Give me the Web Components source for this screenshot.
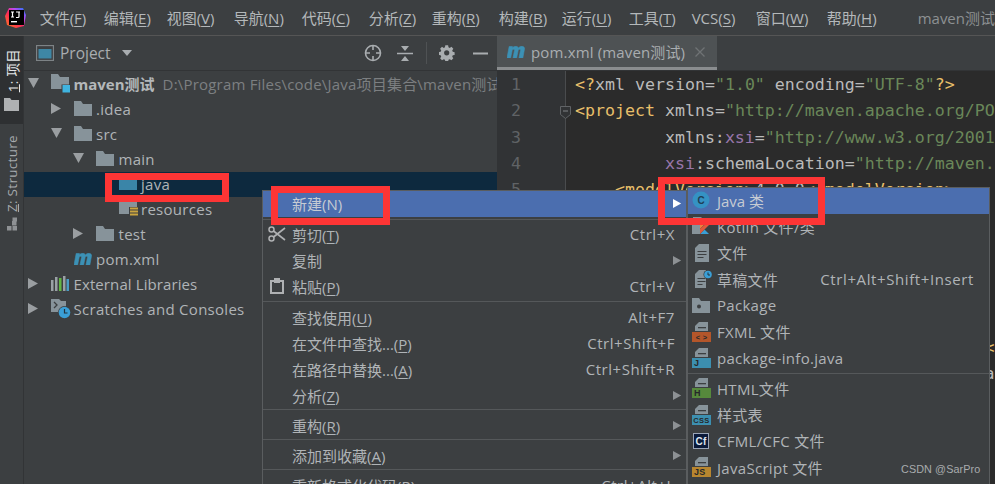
<!DOCTYPE html>
<html lang="zh">
<head>
<meta charset="utf-8">
<title>maven测试</title>
<style>
html,body{margin:0;padding:0;background:#3c3f41}
body{font-family:"Open Sans","Noto Sans CJK SC",sans-serif;font-size:15px;color:#bbb}
</style>
</head>
<body>
<ide-app></ide-app>
<script>
//icons, all drawn inline
const ICONS = {
  logo:`<svg width="22" height="22" viewBox="0 0 22 22"><defs><linearGradient id="g" x1="0" y1="1" x2="1" y2="0"><stop offset="0" stop-color="#fc801d"/><stop offset=".45" stop-color="#fe2857"/><stop offset=".7" stop-color="#b74af7"/><stop offset="1" stop-color="#087cfa"/></linearGradient></defs><path d="M4 1h14l3 7-2 11-8 2-9-3-2-9z" fill="url(#g)"/><rect x="4" y="3" width="15" height="15" fill="#000"/><rect x="6" y="14" width="6" height="1.4" fill="#fff"/><path d="M6 5h3M7.500 5v5M6 10h3M11 5h4M14 5v4.500q0 1-1 1h-2" stroke="#fff" stroke-width="1.200" fill="none"/></svg>`,
  folder:`<svg width="18" height="15" viewBox="0 0 18 15"><path d="M0 0h7l2 3h9v12H0z" fill="#87939a"/></svg>`,
  module:`<svg width="20" height="19" viewBox="0 0 20 19"><path d="M0 0h7l2 3h9v12H0z" fill="#87939a"/><rect x="10.500" y="10.500" width="9" height="9" fill="#3c3f41"/><rect x="11.500" y="11" width="7.500" height="7.500" fill="#3fb4e0"/></svg>`,
  source:`<svg width="18" height="15" viewBox="0 0 18 15"><path d="M0 1h7l1 1h10v12H0z" fill="#3a85a8"/></svg>`,
  resources:`<svg width="20" height="19" viewBox="0 0 20 19"><path d="M0 0h7l2 3h9v12H0z" fill="#87939a"/><rect x="10" y="8" width="10" height="11" fill="#3c3f41"/><path d="M11 9.500h8M11 12.500h8M11 15.500h8" stroke="#c9a43f" stroke-width="1.800"/></svg>`,
  maven:`<svg width="18" height="12" viewBox="2.500 1 16.500 13" preserveAspectRatio="none"><path d="M2.500 14 L4.500 1.500h3l-.3 1.500Q9 1 11 1.300q1.500.3 1.800 1.900Q14.500 1 16.500 1.300q2.500.4 2 3.200L17 14h-3.500l1.400-8.300q.2-1.300-.7-1.300-1 0-1.500 1.500L11.300 14H8l1.400-8.300q.2-1.300-.7-1.300-1 0-1.500 1.500L5.800 14z" fill="#3c91b5" stroke="#3c91b5" stroke-width=".6"/></svg>`,
  libs:`<svg width="18" height="16" viewBox="0 0 18 16"><rect x="0" y="4" width="2.500" height="11" fill="#9aa1a6"/><rect x="4" y="1" width="2.500" height="14" fill="#9aa1a6"/><rect x="8" y="2" width="2.500" height="13" fill="#62b543"/><rect x="12" y="0" width="2.500" height="15" fill="#9aa1a6"/><rect x="15.500" y="3" width="2.500" height="12" fill="#4a9cc4"/></svg>`,
  scratch:`<svg width="20" height="20" viewBox="0 0 20 20"><path d="M0 0h8l2 2h5v11H0z" fill="#87939a"/><path d="M3 3l3 3-3 3" stroke="#3c3f41" stroke-width="1.300" fill="none"/><circle cx="13.500" cy="13.500" r="6.500" fill="#3c3f41"/><circle cx="13.500" cy="13.500" r="5.800" fill="#3a9fd6"/><path d="M13.500 10v4h3" stroke="#23333d" stroke-width="1.200" fill="none"/></svg>`,
  projectView:`<svg width="18" height="16" viewBox="0 0 18 16"><rect x=".5" y=".5" width="17" height="15" fill="#3c3f41" stroke="#7d8386" stroke-width="1.300"/><rect x="2.500" y="4" width="13" height="9.500" fill="#3e87a5"/></svg>`,
  target:`<svg width="18" height="18" viewBox="0 0 18 18"><circle cx="9" cy="9" r="7.500" fill="none" stroke="#a9adb0" stroke-width="1.600"/><path d="M9 1v5M9 12v5M1 9h5M12 9h5" stroke="#a9adb0" stroke-width="1.600"/></svg>`,
  collapse:`<svg width="16" height="17" viewBox="0 0 16 17"><path d="M0 8.500h16" stroke="#a9adb0" stroke-width="1.500"/><path d="M4 1h8L8 6zM4 16h8l-4-5z" fill="#a9adb0"/></svg>`,
  gear:`<svg width="16" height="16" viewBox="0 0 16 16"><path d="M6.500 0h3l.4 2.200 1.300.6 1.900-1.200 2 2.200-1.200 1.800.6 1.400 2 .4v3l-2 .4-.6 1.400 1.200 1.800-2 2.200-1.900-1.200-1.300.6-.4 2h-3l-.4-2-1.300-.6-1.900 1.200-2-2.200 1.200-1.800-.6-1.400-2-.4v-3l2-.4.6-1.400L.9 3.800l2-2.200 1.900 1.200 1.300-.6z" fill="#a9adb0" transform="scale(.93) translate(.3 .3)"/><circle cx="7.700" cy="7.800" r="2.600" fill="#3c3f41"/></svg>`,
  minus:`<svg width="15" height="3" viewBox="0 0 15 3"><rect width="15" height="2" y=".5" fill="#a9adb0"/></svg>`,
  stripFolder:`<svg width="15" height="13" viewBox="0 0 15 13"><path d="M0 0h6l1.500 2H15v11H0z" fill="#afb1b3"/></svg>`,
  structure:`<svg width="14" height="14" viewBox="0 0 14 14"><path d="M5 0h4.500v4.500H5zM0 5h4.500v4.500H0zM5.500 5H10v4.500H5.500z" fill="#8e9194" transform="translate(2 4)"/><rect x="7.500" y="0.500" width="4.500" height="4" fill="#8e9194"/></svg>`,
  close:`<svg width="10" height="10" viewBox="0 0 10 10"><path d="M.5.500l9 9M9.500.500l-9 9" stroke="#6f7375" stroke-width="1.300"/></svg>`,
  scissors:`<svg width="18" height="16" viewBox="0 0 18 16"><circle cx="3.500" cy="3.500" r="2.500" fill="none" stroke="#afb1b3" stroke-width="1.500"/><circle cx="3.500" cy="12.500" r="2.500" fill="none" stroke="#afb1b3" stroke-width="1.500"/><path d="M5.500 5L17 14M5.500 11L17 2" stroke="#afb1b3" stroke-width="1.600"/></svg>`,
  paste:`<svg width="14" height="16" viewBox="0 0 14 16"><rect x="1" y="3" width="12" height="12" fill="none" stroke="#afb1b3" stroke-width="2"/><rect x="4" y="0" width="6" height="5" fill="#afb1b3"/></svg>`,
  classC:`<svg width="18" height="18" viewBox="0 0 18 18"><circle cx="9" cy="9" r="8.500" fill="#3592c4"/><text x="9" y="12.500" text-anchor="middle" font-family="Liberation Sans" font-size="10" font-weight="700" fill="#1f3f55">C</text></svg>`,
  kotlin:`<svg width="18" height="18" viewBox="0 0 18 18"><path d="M1 0h8l3 3v5H1z" fill="#87939a"/><rect x="0" y="5" width="8" height="12" fill="#87939a"/><path d="M8 8h9l-5 4.500L17.500 18H8z" fill="#3c3f41"/><path d="M8 8h4L8 12z" fill="#ef7f3b"/><path d="M8 17l4.500-4.500L17 17z" fill="#3a9fd6"/><path d="M12.500 8h4.500l-9 9v-5z" fill="#e0593b"/></svg>`,
  file:`<svg width="14" height="18" viewBox="0 0 14 18"><path d="M0 4l4-4h10v18H0z" fill="#87939a"/><path d="M2.500 7.500h9M2.500 10.500h9M2.500 13.500h6" stroke="#3c3f41" stroke-width="1.200"/></svg>`,
  scratchFile:`<svg width="18" height="18" viewBox="0 0 18 18"><path d="M0 4l4-4h7v18H0z" fill="#87939a"/><rect x="9" y="5" width="2" height="13" fill="#87939a"/><path d="M2.500 8.500h8M2.500 11.500h8M2.500 14.500h5" stroke="#3c3f41" stroke-width="1.200"/><circle cx="13" cy="4.500" r="4.500" fill="#3c3f41"/><circle cx="13" cy="4.500" r="3.800" fill="#3a9fd6"/><path d="M13 2.500v2.500h2" stroke="#23333d" fill="none"/></svg>`,
  pkg:`<svg width="18" height="15" viewBox="0 0 18 15"><path d="M0 0h7l2 3h9v12H0z" fill="#87939a"/><circle cx="7" cy="8.500" r="2" fill="#3c3f41"/></svg>`,
  cfml:`<svg width="16" height="16" viewBox="0 0 16 16"><rect x=".5" y=".5" width="15" height="15" fill="#0b1a3a" stroke="#9aa5b8"/><text x="8" y="12" text-anchor="middle" font-family="Liberation Sans" font-weight="700" font-size="10" fill="#dfe6f0">Cf</text></svg>`
};

//file icon with a coloured band (fxml, html, ...)
function badgeIcon(color, label) {
  return `<svg width="19" height="20" viewBox="0 0 19 20"><path d="M3 9V4l4-4h9v9z" fill="#87939a"/><rect x="6" y="5" width="8" height="1.300" fill="#3c3f41"/><rect x="0" y="10" width="19" height="10" fill="${color}"/><text x="${label.length > 2 ? 9.5 : 2}" y="18.400" ${label.length > 2 ? 'text-anchor="middle"' : ''} font-family="Liberation Sans" font-weight="700" font-size="${label.length > 2 ? 7.5 : 9}" fill="#26282a">${label}</text></svg>`;
}
ICONS.fxml = badgeIcon('#b4562a', '&lt; &gt;');
ICONS.jinfo = badgeIcon('#3c8fb0', 'J');
ICONS.html = badgeIcon('#56893c', 'H');
ICONS.css = badgeIcon('#3c8fb0', 'CSS');
ICONS.js = badgeIcon('#b8862f', 'JS');

const tri = (dir, c) => {
  const d = dir === 'down' ? 'M0 0h11L5.500 10z' : 'M0 0l10 5.500L0 11z';
  return `<svg width="11" height="11" viewBox="0 0 11 11"><path d="${d}" fill="${c}"/></svg>`;
};

class IdeIcon extends HTMLElement {
  constructor() {
    super();
    this.attachShadow({mode:'open'});
    this.shadowRoot.innerHTML = `<style>:host{display:inline-flex;align-items:center;justify-content:center;line-height:0}</style>${ICONS[this.getAttribute('name')] || ''}`;
  }
}

class MenuBar extends HTMLElement {
  constructor() {
    super();
    //widths are the pitch of the menus in the window
    const items = [['文件','F',64],['编辑','E',63],['视图','V',67],['导航','N',68],['代码','C',67],['分析','Z',63],['重构','R',67],['构建','B',63],['运行','U',67],['工具','T',63],['VCS','S',64],['窗口','W',71],['帮助','H',91]];
    this.attachShadow({mode:'open'});
    this.shadowRoot.innerHTML = `
<style>
:host{display:flex;align-items:center;height:35px;border-bottom:1px solid #555;background:#3c3f41;box-sizing:content-box;overflow:hidden;white-space:nowrap}
.logo{margin-left:5px;width:36.500px;display:flex}
.items{display:flex;align-items:center;color:#b4b8ba}
.title{color:#8d9193}
u{text-underline-offset:2px}
</style>
<div class="logo"><ide-icon name="logo"></ide-icon></div>
<div class="items">${items.map(i => `<span style="width:${i[2]}px">${i[0]}(<u>${i[1]}</u>)</span>`).join('')}</div>
<span class="title">maven测试</span>`;
  }
}

class ToolStrip extends HTMLElement {
  constructor() {
    super();
    this.attachShadow({mode:'open'});
    this.shadowRoot.innerHTML = `
<style>
:host{display:flex;flex-direction:column;width:23px;border-right:1px solid #323436;background:#3c3f41;flex:none;font-size:13.500px}
.tab{display:flex;flex-direction:column;align-items:center}
.sel{height:88px;background:#2e3032;color:#e4e6e7;padding-top:13px;box-sizing:border-box;gap:6px}
.other{padding-top:11px;color:#a6aaad;gap:5px}
.v{writing-mode:vertical-rl;text-orientation:sideways;transform:rotate(180deg);white-space:nowrap;letter-spacing:.3px}
</style>
<div class="tab sel"><span class="v"><u>1</u>: 项目</span><ide-icon name="stripFolder"></ide-icon></div>
<div class="tab other"><span class="v"><u>Z</u>: Structure</span><ide-icon name="structure"></ide-icon></div>`;
  }
}

class TreeRow extends HTMLElement {
  constructor() {
    super();
    const level = +this.getAttribute('level') || 0;
    const arrow = this.getAttribute('arrow');
    const sel = this.hasAttribute('selected');
    this.attachShadow({mode:'open'});
    this.shadowRoot.innerHTML = `
<style>
:host{display:flex;align-items:center;height:25px;box-sizing:border-box;padding-bottom:2px;white-space:nowrap;overflow:hidden;padding-left:${4 + level * 22.5}px;background:${sel ? '#0d293e' : 'transparent'};color:#b0b4b7;letter-spacing:.28px}
.arrow{width:23px;flex:none;display:flex;padding-left:0}
.icon{width:22.500px;flex:none;display:flex}
</style>
<span class="arrow">${arrow ? tri(arrow, '#9a9ea1') : ''}</span>
<span class="icon"><ide-icon name="${this.getAttribute('icon')}"></ide-icon></span>
<slot></slot>`;
  }
}

class ProjectPanel extends HTMLElement {
  constructor() {
    super();
    this.attachShadow({mode:'open'});
    this.shadowRoot.innerHTML = `
<style>
:host{display:flex;flex-direction:column;width:473px;flex:none;overflow:hidden;background:#3c3f41}
header{display:flex;align-items:center;height:34px;border-bottom:1px solid #323436;padding-left:12px;color:#a9adb0;flex:none}
.name{margin-left:6px;font-size:15.500px}
.drop{margin-left:11px;width:0;height:0;border:5.500px solid transparent;border-top:6px solid #a9adb0;border-bottom:0}
.tools{margin-left:auto;display:flex;align-items:center;padding-right:9px}
.sep{width:1px;height:22px;background:#4f5254}
.tree{padding-top:1px;flex:1}
.path{color:#7c7f81;margin-left:8px;letter-spacing:.2px}
b{font-weight:700;color:#b4b8ba;letter-spacing:0}
</style>
<header>
  <ide-icon name="projectView"></ide-icon><span class="name">Project</span><span class="drop"></span>
  <div class="tools">
    <ide-icon name="target" style="margin-right:15px"></ide-icon><ide-icon name="collapse" style="margin-right:13px"></ide-icon><span class="sep"></span><ide-icon name="gear" style="margin:0 18px 0 12px"></ide-icon><ide-icon name="minus"></ide-icon>
  </div>
</header>
<div class="tree">
<tree-row level="0" arrow="down" icon="module"><b>maven测试</b><span class="path">D:\\Program Files\\code\\Java项目集合\\maven测试</span></tree-row>
<tree-row level="1" arrow="right" icon="folder">.idea</tree-row>
<tree-row level="1" arrow="down" icon="folder">src</tree-row>
<tree-row level="2" arrow="down" icon="folder">main</tree-row>
<tree-row level="3" icon="source" selected>java</tree-row>
<tree-row level="3" icon="resources">resources</tree-row>
<tree-row level="2" arrow="right" icon="folder">test</tree-row>
<tree-row level="1" icon="maven">pom.xml</tree-row>
<tree-row level="0" arrow="right" icon="libs" style="letter-spacing:.1px">External Libraries</tree-row>
<tree-row level="0" arrow="right" icon="scratch">Scratches and Consoles</tree-row>
</div>`;
  }
}

class CodeEditor extends HTMLElement {
  constructor() {
    super();
    this.attachShadow({mode:'open'});
    const t = s => `<i class="t">${s}</i>`, a = s => `<i class="a">${s}</i>`, v = s => `<i class="v">${s}</i>`, n = s => `<i class="n">${s}</i>`;
    const lines = [
      `${t('&lt;?')}${a('xml')} ${a('version')}=${v('"1.0"')} ${a('encoding')}=${v('"UTF-8"')}${t('?&gt;')}`,
      `${t('&lt;project')} ${a('xmlns')}=${v('"http://maven.apache.org/PO')}`,
      `         ${a('xmlns:')}${n('xsi')}=${v('"http://www.w3.org/2001')}`,
      `         ${n('xsi')}${a(':schemaLocation')}=${v('"http://maven.')}`,
      `    ${t('&lt;modelVersion&gt;')}${a('4.0.0')}${t('&lt;/modelVersion&gt;')}`,
      '', '', '', '', '',
      `${' '.repeat(41)}${t('&lt;')}`,
      `${' '.repeat(41)}${a('a')}`
    ];
    this.shadowRoot.innerHTML = `
<style>
:host{display:flex;flex-direction:column;flex:1;min-width:0;overflow:hidden;background:#2b2b2b}
.tabs{display:flex;height:34px;background:#3c3f41;border-bottom:1px solid #323436;flex:none}
.tab{display:flex;align-items:center;width:220px;background:#4e5254;border-bottom:3px solid #8a8d8f;padding-left:10px;box-sizing:border-box;height:34px;white-space:nowrap;color:#a9adb0;gap:6px;letter-spacing:.15px}
.tab ide-icon:last-child{margin-left:4px}
.body{display:flex;flex:1;min-height:0;padding:0}
.gutter{width:69px;flex:none;background:#313335;border-right:1px solid #4a4c4e;font:16.600px/26.300px "DejaVu Sans Mono",monospace;color:#606366;box-sizing:border-box;padding:1px 0 0 14px;position:relative}
.fold{position:absolute;right:-6px;top:35px;line-height:0}
pre{margin:0;padding:1px 0 0 9px;font:16.600px/26.300px "DejaVu Sans Mono",monospace;color:#bababa;white-space:pre;overflow:hidden;flex:1}
i{font-style:normal}
.t{color:#e8bf6a}.a{color:#bababa}.v{color:#6a8759}.n{color:#9876aa}
</style>
<div class="tabs"><div class="tab"><ide-icon name="maven"></ide-icon><span>pom.xml (maven测试)</span><ide-icon name="close"></ide-icon></div></div>
<div class="body">
  <div class="gutter">1<br>2<br>3<br>4<br>5<span class="fold"><svg width="11" height="13" viewBox="0 0 11 13"><path d="M.5.500h10v8l-5 4-5-4z" fill="#313335" stroke="#606366"/><path d="M3 5h5" stroke="#808386"/></svg></span></div>
  <pre>${lines.join('\n')}</pre>
</div>`;
  }
}

class PopupMenu extends HTMLElement {
  constructor() {
    super();
    this.attachShadow({mode:'open'});
    this.shadowRoot.innerHTML = `
<style>
:host{position:absolute;display:block;box-sizing:border-box;background:#3c3f41;border:1px solid #5a5d5f;border-bottom:0;overflow:hidden;color:#b0b4b7;
 left:var(--x);top:var(--y);width:var(--w);bottom:0}
</style><slot></slot>`;
  }
}

class MenuRow extends HTMLElement {
  constructor() {
    super();
    const icon = this.getAttribute('icon');
    const sc = this.getAttribute('shortcut');
    const sub = this.hasAttribute('sub');
    const active = this.hasAttribute('active');
    this.attachShadow({mode:'open'});
    this.shadowRoot.innerHTML = `
<style>
:host{display:flex;align-items:center;height:var(--row,26px);box-sizing:border-box;padding-bottom:var(--pb,0);white-space:nowrap;background:${active ? '#4b6eaf' : 'transparent'};color:${active ? '#c6cbd3' : 'inherit'};padding-right:var(--pr,11px)}
.ic{width:var(--ic,29px);padding-left:var(--il,5px);box-sizing:border-box;flex:none;display:flex}
.sc{margin-left:auto;letter-spacing:var(--sc,.55px)}
.ar{margin-left:auto;margin-right:-7px;display:flex}
</style>
<span class="ic">${icon ? `<ide-icon name="${icon}"></ide-icon>` : ''}</span>
<span><slot></slot></span>
${sc ? `<span class="sc">${sc}</span>` : ''}
${sub ? `<span class="ar">${tri('right', active ? '#fff' : '#8d9194').replace('width="11" height="11"','width="9" height="11"')}</span>` : ''}`;
  }
}

class MenuSep extends HTMLElement {
  constructor() {
    super();
    this.attachShadow({mode:'open'});
    this.shadowRoot.innerHTML = `<style>:host{display:block;height:var(--h,4px);box-sizing:border-box;padding-top:var(--t,1px)}div{height:1px;background:#55585a}</style><div></div>`;
  }
}

//red boxes someone drew over the screenshot
class RedMark extends HTMLElement {
  constructor() {
    super();
    this.attachShadow({mode:'open'});
    this.shadowRoot.innerHTML = `<style>:host{position:absolute;display:block;box-sizing:border-box;border:7px solid #fd3535;left:var(--x);top:var(--y);width:var(--w);height:var(--h)}</style>`;
  }
}

class IdeApp extends HTMLElement {
  constructor() {
    super();
    this.attachShadow({mode:'open'});
    this.shadowRoot.innerHTML = `
<style>
:host{display:grid;grid-template-rows:36px 1fr;width:995px;height:484px;overflow:hidden;position:relative;background:#3c3f41}
.main{display:flex;min-height:0}
.wm{position:absolute;left:901px;top:463px;font:10.800px "Liberation Sans",sans-serif;color:#a9acae;letter-spacing:.1px}
u{text-underline-offset:2px}
</style>
<menu-bar></menu-bar>
<div class="main"><tool-strip></tool-strip><project-panel></project-panel><code-editor></code-editor></div>

<popup-menu style="--x:262px;--y:190px;--w:425px">
  <menu-row active sub style="--pb:2px">新建(N)</menu-row>
  <menu-sep style="--h:4px;--t:2px"></menu-sep>
  <menu-row icon="scissors" shortcut="Ctrl+X">剪切(<u>T</u>)</menu-row>
  <menu-row sub>复制</menu-row>
  <menu-row icon="paste" shortcut="Ctrl+V" style="--il:7px">粘贴(<u>P</u>)</menu-row>
  <menu-sep style="--h:5px;--t:2px"></menu-sep>
  <menu-row shortcut="Alt+F7">查找使用(<u>U</u>)</menu-row>
  <menu-row shortcut="Ctrl+Shift+F">在文件中查找...(<u>P</u>)</menu-row>
  <menu-row shortcut="Ctrl+Shift+R">在路径中替换...(<u>A</u>)</menu-row>
  <menu-row sub>分析(<u>Z</u>)</menu-row>
  <menu-sep></menu-sep>
  <menu-row sub>重构(<u>R</u>)</menu-row>
  <menu-sep></menu-sep>
  <menu-row sub>添加到收藏(<u>A</u>)</menu-row>
  <menu-sep></menu-sep>
  <menu-row shortcut="Ctrl+Alt+L">重新格式化代码(<u>R</u>)</menu-row>
</popup-menu>

<popup-menu style="--x:687px;--y:187px;--w:303px;--ic:29px;--il:4px;--pr:15px;--row:26.300px;--pb:2px;letter-spacing:.3px;--sc:.6px">
  <menu-row active icon="classC" style="letter-spacing:0">Java 类</menu-row>
  <menu-row icon="kotlin">Kotlin 文件/类</menu-row>
  <menu-row icon="file" style="--il:7px">文件</menu-row>
  <menu-row icon="scratchFile" shortcut="Ctrl+Alt+Shift+Insert" style="--il:7px">草稿文件</menu-row>
  <menu-row icon="pkg">Package</menu-row>
  <menu-row icon="fxml">FXML 文件</menu-row>
  <menu-row icon="jinfo">package-info.java</menu-row>
  <menu-sep></menu-sep>
  <menu-row icon="html">HTML文件</menu-row>
  <menu-row icon="css">样式表</menu-row>
  <menu-row icon="cfml" style="--il:5px">CFML/CFC 文件</menu-row>
  <menu-row icon="js">JavaScript 文件</menu-row>
</popup-menu>

<red-mark style="--x:105px;--y:173px;--w:124px;--h:29px"></red-mark>
<red-mark style="--x:271px;--y:186px;--w:119px;--h:39px"></red-mark>
<red-mark style="--x:658px;--y:177px;--w:167px;--h:48px"></red-mark>
<span class="wm">CSDN @SarPro</span>`;
  }
}

customElements.define('ide-icon', IdeIcon);
customElements.define('menu-bar', MenuBar);
customElements.define('tool-strip', ToolStrip);
customElements.define('tree-row', TreeRow);
customElements.define('project-panel', ProjectPanel);
customElements.define('code-editor', CodeEditor);
customElements.define('popup-menu', PopupMenu);
customElements.define('menu-row', MenuRow);
customElements.define('menu-sep', MenuSep);
customElements.define('red-mark', RedMark);
customElements.define('ide-app', IdeApp);
</script>
</body>
</html>
